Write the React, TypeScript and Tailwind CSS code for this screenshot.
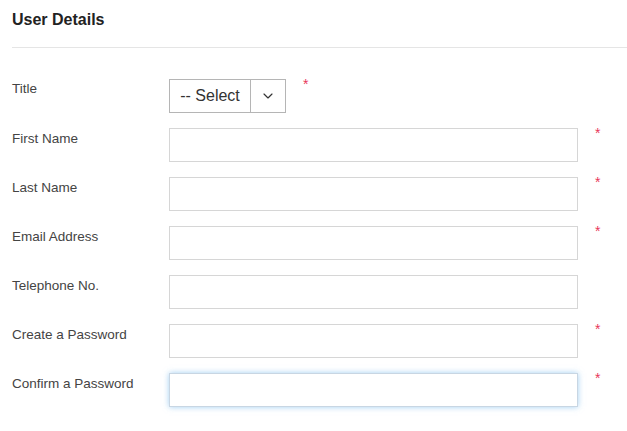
import { ChevronDown } from 'lucide-react';

const fields = [
    { label: 'First Name', required: true },
    { label: 'Last Name', required: true },
    { label: 'Email Address', required: true },
    { label: 'Telephone No.', required: false },
    { label: 'Create a Password', required: true },
    { label: 'Confirm a Password', required: true, focused: true },
];

function Star() {
    return <span className="block text-[14px] leading-[10px] text-[#e8375a]">*</span>;
}

export default function App() {
    return (
        <div className="w-[627px] h-[431px] bg-white pl-3 font-['Liberation_Sans',Arial,sans-serif]">
            <div className="pt-[10px] pb-[18px] border-b border-[#e5e5e5]">
                <h2 className="text-[16px] font-bold text-[#222] leading-[19px]">User Details</h2>
            </div>

            <div className="flex flex-col gap-[15px] pt-[30px]">
                {/* title select */}
                <div className="flex">
                    <label className="w-[157px] pt-[2px] text-[13.5px] leading-[17px] text-[#444]">Title</label>
                    <div className="mt-[1px] flex h-[34px] w-[117px] border border-[#b5b5b5] bg-white">
                        <div className="flex w-[81px] items-center justify-center border-r border-[#b5b5b5] text-[16px] text-[#333]">
                            -- Select
                        </div>
                        <div className="flex flex-1 items-center justify-center text-[#333]">
                            <ChevronDown className="w-4 h-4" strokeWidth={1.75} />
                        </div>
                    </div>
                    <div className="ml-[17px] pt-[1px]"><Star /></div>
                </div>

                {fields.map(f => (
                    <div key={f.label} className="flex">
                        <label className="w-[157px] pt-[2px] text-[13.5px] leading-[17px] text-[#444]">{f.label}</label>
                        <input
                            className={`h-[34px] w-[409px] border bg-white outline-none ${f.focused
                                ? 'border-[#c8d6e3] shadow-[0_0_6px_rgba(102,175,233,0.6)]'
                                : 'border-[#d6d6d6]'}`}
                        />
                        {f.required && <div className="ml-[17px] pt-0"><Star /></div>}
                    </div>
                ))}
            </div>
        </div>
    );
}
